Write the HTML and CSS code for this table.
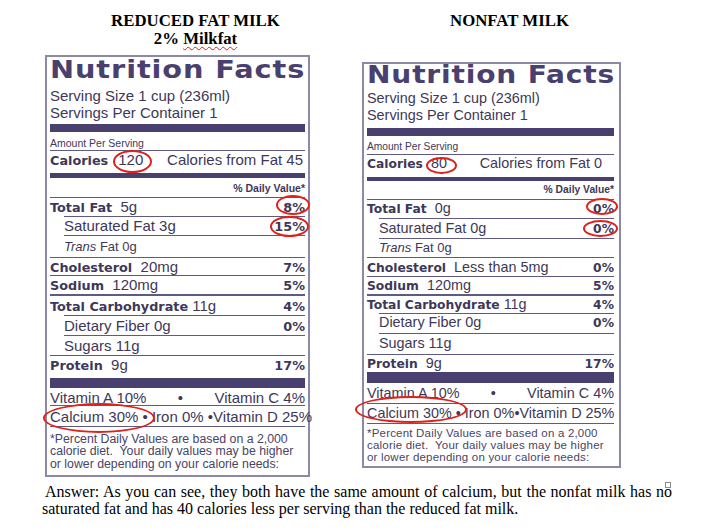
FILE: index.html
```html
<!DOCTYPE html>
<html>
<head>
<meta charset="utf-8">
<link rel="stylesheet" href="styles.css">
</head>
<body>
<div class="page">
  <div class="labels">
    <div class="col">
      <div class="heading">
        <div>REDUCED FAT MILK</div>
        <div>2% <span class="squiggle">Milkfat</span></div>
      </div>
      <div class="label label-a">
        <div class="nf">Nutrition Facts</div>
        <div class="serv">
          <div>Serving Size 1 cup (236ml)</div>
          <div>Servings Per Container 1</div>
        </div>
        <div class="bar bar1"></div>
        <div class="amt">Amount Per Serving</div>
        <div class="row line r-cal"><span><span class="b">Calories</span><span class="cal">120</span></span><span class="cff">Calories from Fat 45</span></div>
        <div class="bar bar2"></div>
        <div class="r-dv">% Daily Value*</div>
        <div class="row line r-tf"><span><span class="b">Total Fat</span>&nbsp; 5g</span><span class="b">8%</span></div>
        <div class="row line sub r-sf"><span>Saturated Fat 3g</span><span class="b">15%</span></div>
        <div class="row line sub r-tr"><span><i>Trans</i> Fat 0g</span></div>
        <div class="row line r-ch"><span><span class="b">Cholesterol</span>&nbsp; 20mg</span><span class="b">7%</span></div>
        <div class="row line r-so"><span><span class="b">Sodium</span>&nbsp; 120mg</span><span class="b">5%</span></div>
        <div class="row line2 r-tc"><span><span class="b">Total Carbohydrate</span> 11g</span><span class="b">4%</span></div>
        <div class="row line sub r-fi"><span>Dietary Fiber 0g</span><span class="b">0%</span></div>
        <div class="row line sub r-su"><span>Sugars 11g</span></div>
        <div class="row line r-pr"><span><span class="b">Protein</span>&nbsp; 9g</span><span class="b">17%</span></div>
        <div class="bar bar3"></div>
        <div class="row r-va"><span>Vitamin A 10%</span><span>•</span><span>Vitamin C 4%</span></div>
        <div class="row line r-ca"><span>Calcium 30% • Iron 0% •Vitamin D 25%</span></div>
        <div class="line fn">*Percent Daily Values are based on a 2,000<br>calorie diet.&nbsp; Your daily values may be higher<br>or lower depending on your calorie needs:</div>
      </div>
    </div>
    <div class="col">
      <div class="heading">
        <div>NONFAT MILK</div>
      </div>
      <div class="label label-b">
        <div class="nf">Nutrition Facts</div>
        <div class="serv">
          <div>Serving Size 1 cup (236ml)</div>
          <div>Servings Per Container 1</div>
        </div>
        <div class="bar bar1"></div>
        <div class="amt">Amount Per Serving</div>
        <div class="row line r-cal"><span><span class="b">Calories</span><span class="cal">80</span></span><span class="cff">Calories from Fat 0</span></div>
        <div class="bar bar2"></div>
        <div class="r-dv">% Daily Value*</div>
        <div class="row line r-tf"><span><span class="b">Total Fat</span>&nbsp; 0g</span><span class="b">0%</span></div>
        <div class="row line sub r-sf"><span>Saturated Fat 0g</span><span class="b">0%</span></div>
        <div class="row line sub r-tr"><span><i>Trans</i> Fat 0g</span></div>
        <div class="row line r-ch"><span><span class="b">Cholesterol</span>&nbsp; Less than 5mg</span><span class="b">0%</span></div>
        <div class="row line r-so"><span><span class="b">Sodium</span>&nbsp; 120mg</span><span class="b">5%</span></div>
        <div class="row line2 r-tc"><span><span class="b">Total Carbohydrate</span> 11g</span><span class="b">4%</span></div>
        <div class="row line sub r-fi"><span>Dietary Fiber 0g</span><span class="b">0%</span></div>
        <div class="row line sub r-su"><span>Sugars 11g</span></div>
        <div class="row line r-pr"><span><span class="b">Protein</span>&nbsp; 9g</span><span class="b">17%</span></div>
        <div class="bar bar3"></div>
        <div class="row r-va"><span>Vitamin A 10%</span><span>•</span><span>Vitamin C 4%</span></div>
        <div class="row line r-ca"><span>Calcium 30% • Iron 0%•Vitamin D 25%</span></div>
        <div class="line fn">*Percent Daily Values are based on a 2,000<br>calorie diet.&nbsp; Your daily values may be higher<br>or lower depending on your calorie needs:</div>
      </div>
    </div>
  </div>
  <div class="answer">
    <div class="l1">Answer: As you can see, they both have the same amount of calcium, but the nonfat milk has no</div>
    <div class="l2">saturated fat and has 40 calories less per serving than the reduced fat milk.</div>
  </div>

  <span class="ring ring-a-cal"></span>
  <span class="ring ring-a-tf"></span>
  <span class="ring ring-a-sf"></span>
  <span class="ring ring-a-ca"></span>
  <span class="ring ring-b-cal"></span>
  <span class="ring ring-b-tf"></span>
  <span class="ring ring-b-sf"></span>
  <span class="ring ring-b-ca"></span>
  <span class="anchor"></span>
</div>
</body>
</html>
```

FILE: styles.css
```css
html, body {
  margin: 0;
  padding: 0;
  background: #ffffff;
}

.page {
  position: relative;
  width: 706px;
  height: 530px;
  overflow: hidden;
}

.labels {
  display: flex;
  align-items: flex-start;
  padding-left: 45px;
  gap: 52px;
}

.heading {
  height: 55px;
  box-sizing: border-box;
  padding-top: 12px;
  padding-left: 36px;
  text-align: center;
  font-family: "Liberation Serif", "Times New Roman", serif;
  font-weight: bold;
  font-size: 16.8px;
  line-height: 18px;
  color: #000;
  white-space: nowrap;
}

.squiggle {
  text-decoration-line: underline;
  text-decoration-style: wavy;
  text-decoration-color: #e0201a;
  text-decoration-thickness: 1px;
  text-underline-offset: 2px;
}

.label {
  border: 2px solid #8c88a8;
  background: #fff;
  color: #3e3858;
  font-family: "Liberation Sans", Arial, sans-serif;
  font-size: 15px;
  white-space: nowrap;
}

.label-a {
  width: 255px;
  padding: 0 3px;
}

.label-b {
  width: 247px;
  padding: 0 5px 0 3px;
  margin-top: 7px;
  font-size: 14.4px;
}

.nf {
  font-family: "DejaVu Sans", sans-serif;
  font-weight: bold;
  color: #4a4070;
  transform-origin: left center;
  overflow: visible;
}

.label-a .nf {
  font-size: 25px;
  height: 25px;
  line-height: 25px;
  letter-spacing: 0.8px;
  transform: scaleX(1.15);
}

.label-b .nf {
  font-size: 24px;
  height: 23px;
  line-height: 23px;
  letter-spacing: 0.7px;
  transform: scaleX(1.17);
}

.serv {
  line-height: 17px;
}
.serv div { height: 17px; }
.label-a .serv { margin-top: 5px; }
.label-b .serv { margin-top: 3px; }

.bar {
  background: #4a4070;
}
.label-a .bar1 { margin-top: 3px; height: 8px; }
.label-b .bar1 { margin-top: 4px; height: 8px; }
.label-a .bar2 { height: 5px; }
.label-b .bar2 { height: 4px; }
.label-a .bar3 { height: 10px; }
.label-b .bar3 { height: 11px; }

.amt {
  padding-top: 4px;
  line-height: 14px;
  height: 14px;
}
.label-a .amt { font-size: 10.5px; }
.label-b .amt { font-size: 10.2px; }

.row {
  display: flex;
  justify-content: space-between;
  align-items: baseline;
  overflow: visible;
}

.line {
  border-top: 1px solid #5f5a80;
}

.line2 {
  border-top: 2px solid #5f5a80;
}

.sub {
  margin-left: 14px;
}
.label-b .sub {
  margin-left: 12px;
}

.b {
  font-family: "DejaVu Sans", sans-serif;
  font-weight: bold;
  color: #3e3858;
}
.label-a .b { font-size: 12.8px; }
.label-b .b { font-size: 12.3px; }

.label-a .cal { margin-left: 10px; }
.label-b .cal { margin-left: 8px; }

.r-dv {
  text-align: right;
  font-weight: bold;
  height: 18px;
  line-height: 18px;
}
.label-a .r-dv { font-size: 10.5px; padding-top: 1px; }
.label-b .r-dv { font-size: 10.3px; }

.r-tr { font-size: 13px; }

/* label A row metrics */
.label-a .r-cal { height: 18px; line-height: 18px; padding-bottom: 4px; }
.label-a .r-tf { height: 18px; line-height: 18px; }
.label-a .r-sf { height: 18px; line-height: 18px; }
.label-a .r-tr { height: 21px; line-height: 21px; }
.label-a .r-ch { height: 17px; line-height: 17px; }
.label-a .r-so { height: 18px; line-height: 18px; }
.label-a .r-tc { height: 19px; line-height: 19px; }
.label-a .r-fi { height: 19px; line-height: 19px; }
.label-a .r-su { height: 19px; line-height: 19px; }
.label-a .r-pr { height: 18px; line-height: 18px; padding-bottom: 4px; }
.label-a .r-va { height: 15px; line-height: 15px; padding-top: 2px; }
.label-a .r-ca { height: 18px; line-height: 18px; padding-top: 2px; }
.label-a .cff { padding-right: 2px; }

/* label B row metrics */
.label-b .r-cal { height: 16px; line-height: 16px; padding-bottom: 6px; }
.label-b .r-tf { height: 16px; line-height: 16px; padding-bottom: 2px; }
.label-b .r-sf { height: 19px; line-height: 19px; }
.label-b .r-tr { height: 18px; line-height: 18px; }
.label-b .r-ch { height: 18px; line-height: 18px; }
.label-b .r-so { height: 17px; line-height: 17px; }
.label-b .r-tc { height: 17px; line-height: 17px; }
.label-b .r-fi { height: 17px; line-height: 17px; padding-bottom: 2px; }
.label-b .r-su { height: 18px; line-height: 18px; padding-bottom: 2px; }
.label-b .r-pr { height: 16px; line-height: 16px; padding-bottom: 1px; }
.label-b .r-va { height: 19px; line-height: 19px; padding-top: 1px; }
.label-b .r-ca { height: 19px; line-height: 19px; }
.label-b .cff { padding-right: 12px; }

.fn {
  color: #4a4466;
}
.label-a .fn {
  font-size: 12.3px;
  line-height: 12.5px;
  height: 37.5px;
  padding-top: 5.5px;
  padding-bottom: 5px;
}
.label-b .fn {
  font-size: 11.5px;
  letter-spacing: 0.2px;
  line-height: 12px;
  height: 36px;
  padding-top: 2.5px;
  padding-bottom: 3.5px;
}

.answer {
  margin-top: 6px;
  font-family: "Liberation Serif", "Times New Roman", serif;
  font-size: 16px;
  line-height: 17px;
  color: #000;
}

.answer .l1 {
  margin-left: 45px;
  width: 627px;
  height: 17px;
  text-align: justify;
  text-align-last: justify;
  white-space: nowrap;
}

.answer .l2 {
  margin-left: 42px;
  height: 17px;
}

.ring {
  position: absolute;
  border: 2px solid #e0201a;
  border-radius: 50%;
  box-sizing: border-box;
}

.ring-a-cal { left: 113px; top: 150px; width: 39px; height: 23px; }
.ring-a-tf  { left: 276px; top: 195px; width: 34px; height: 20px; }
.ring-a-sf  { left: 270px; top: 216px; width: 39px; height: 21px; }
.ring-a-ca  { left: 43px;  top: 403px; width: 112px; height: 30px; }
.ring-b-cal { left: 426px; top: 157px; width: 31px; height: 17px; }
.ring-b-tf  { left: 586px; top: 198px; width: 32px; height: 17px; }
.ring-b-sf  { left: 583px; top: 220px; width: 35px; height: 17px; }
.ring-b-ca  { left: 355px; top: 396px; width: 112px; height: 27px; }

.anchor {
  position: absolute;
  left: 665px;
  top: 482px;
  width: 4px;
  height: 4px;
  border: 1px solid #8a8a8a;
}
```
